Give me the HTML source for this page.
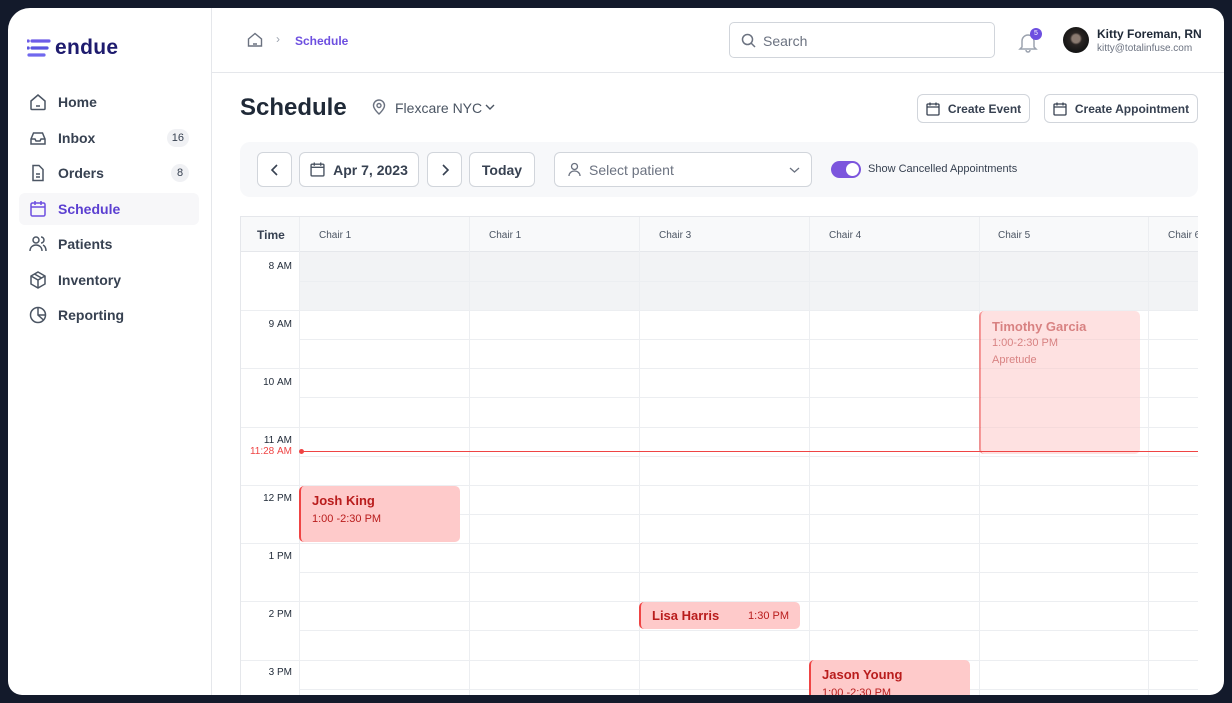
<!DOCTYPE html>
<html><head><meta charset="utf-8"><style>
*{box-sizing:border-box;margin:0;padding:0}
body{width:1232px;height:703px;background:#131a2b;font-family:"Liberation Sans",sans-serif;overflow:hidden;position:relative;color:#1f2937}
.app{position:absolute;left:8px;top:8px;width:1216px;height:687px;background:#fff;border-radius:22px 14px 14px 14px;overflow:hidden}
.abs{position:absolute}
.side{position:absolute;left:0;top:0;width:204px;height:687px;border-right:1px solid #e5e7eb}
.nav{position:absolute;left:11px;width:180px;height:32px;display:flex;align-items:center;font-size:14px;font-weight:bold;color:#374151}
.nav svg{position:absolute;left:10px}
.nav span.t{position:absolute;left:39px}
.badge{position:absolute;right:10px;background:#f0f1f4;border-radius:10px;font-size:11px;font-weight:normal;color:#374151;height:18px;min-width:18px;padding:0 5px;display:flex;align-items:center;justify-content:center}
.btn{position:absolute;border:1px solid #d1d5db;border-radius:6px;background:#fff;display:flex;align-items:center;justify-content:center;font-size:13px;font-weight:bold;color:#374151}
.grid{position:absolute;left:232px;top:208px;width:958px;height:480px;border-left:1px solid #e5e7eb;border-top:1px solid #e5e7eb;overflow:hidden}
.ev{position:absolute;border-left:2px solid #ef4444;border-radius:5px;background:#fecaca;color:#b91c1c;font-size:11px}
.ev b{display:block;font-size:13px;color:#b91c1c}
</style></head><body>
<div class="app">
<div class="side">
 <svg class="abs" style="left:19px;top:30px" width="26" height="22"><g stroke-linecap="round" stroke-width="3.2"><line x1="5" y1="3" x2="22" y2="3" stroke="#6d5ce8"/><line x1="1" y1="3" x2="1.2" y2="3" stroke="#6d5ce8"/><line x1="5" y1="10" x2="20" y2="10" stroke="#5a54e0"/><line x1="1" y1="10" x2="1.2" y2="10" stroke="#5a54e0"/><line x1="2" y1="17" x2="17" y2="17" stroke="#7068ee"/></g></svg>
 <div class="abs" style="left:47px;top:28px;font-size:21px;font-weight:bold;color:#1e1b6e;letter-spacing:0.3px">endue</div>
 <div class="nav" style="top:78px"><svg width="18" height="18" viewBox="0 0 18 18" fill="none" stroke="#4b5563" stroke-width="1.5"><path d="M2 8l7-6 7 6v7.5a1 1 0 0 1-1 1H3a1 1 0 0 1-1-1z"/><path d="M7 13h4"/></svg><span class="t">Home</span></div>
 <div class="nav" style="top:114px"><svg width="18" height="18" viewBox="0 0 18 18" fill="none" stroke="#4b5563" stroke-width="1.5"><path d="M2 10l2.5-6h9l2.5 6v5H2z"/><path d="M2 10h4l1 2h4l1-2h4"/></svg><span class="t">Inbox</span><span class="badge">16</span></div>
 <div class="nav" style="top:149px"><svg width="18" height="18" viewBox="0 0 18 18" fill="none" stroke="#4b5563" stroke-width="1.5"><path d="M4 1.5h6l4 4v11H4z"/><path d="M7 10h4M7 13h4"/></svg><span class="t">Orders</span><span class="badge">8</span></div>
 <div class="nav" style="top:185px;background:#f7f7f9;border-radius:6px;color:#5b3fd1"><svg width="18" height="18" viewBox="0 0 18 18" fill="none" stroke="#6d4fe0" stroke-width="1.5"><rect x="2" y="3" width="14" height="13" rx="1.5"/><path d="M2 7h14M6 1v4M12 1v4"/></svg><span class="t">Schedule</span></div>
 <div class="nav" style="top:220px"><svg width="18" height="18" viewBox="0 0 18 18" fill="none" stroke="#4b5563" stroke-width="1.5"><circle cx="7" cy="5" r="3"/><path d="M1 16c0-4 3-6 6-6s6 2 6 6M12 2a3 3 0 0 1 0 6M14 10c2 1 3 3 3 6"/></svg><span class="t">Patients</span></div>
 <div class="nav" style="top:256px"><svg width="18" height="18" viewBox="0 0 18 18" fill="none" stroke="#4b5563" stroke-width="1.5"><path d="M9 1l7 4v8l-7 4-7-4V5z"/><path d="M2 5l7 4 7-4M9 9v8M5.5 3l7 4"/></svg><span class="t">Inventory</span></div>
 <div class="nav" style="top:291px"><svg width="18" height="18" viewBox="0 0 18 18" fill="none" stroke="#4b5563" stroke-width="1.5"><circle cx="9" cy="9" r="7.5"/><path d="M9 1.5V9l5.5 5M9 9h7.5"/></svg><span class="t">Reporting</span></div>
</div>
<div class="abs" style="left:204px;top:64px;width:1012px;height:1px;background:#e5e7eb"></div>
<svg class="abs" style="left:239px;top:24px" width="16" height="16" viewBox="0 0 16 16" fill="none" stroke="#6b7280" stroke-width="1.4"><path d="M1.5 7l6.5-5.5 6.5 5.5v7h-13z"/><path d="M6 12h4"/></svg>
<div class="abs" style="left:268px;top:24px;font-size:12px;color:#9ca3af">›</div>
<div class="abs" style="left:287px;top:26px;font-size:12px;font-weight:bold;color:#6d4fe0">Schedule</div>
<div class="abs" style="left:721px;top:14px;width:266px;height:36px;border:1px solid #d1d5db;border-radius:5px"></div>
<svg class="abs" style="left:733px;top:25px" width="15" height="15" viewBox="0 0 15 15" fill="none" stroke="#6b7280" stroke-width="1.5"><circle cx="6.5" cy="6.5" r="5"/><path d="M10 10l4 4"/></svg>
<div class="abs" style="left:755px;top:25px;font-size:14px;color:#6b7280">Search</div>
<svg class="abs" style="left:1009px;top:23px" width="22" height="22" viewBox="0 0 22 22" fill="none" stroke="#9ca3af" stroke-width="1.5"><path d="M5 16V10a6 6 0 0 1 12 0v6l2 2H3z"/><path d="M9 19a2 2 0 0 0 4 0"/></svg>
<div class="abs" style="left:1022px;top:20px;width:12px;height:12px;border-radius:6px;background:#6d4fe0;color:#fff;font-size:7px;text-align:center;line-height:12px">5</div>
<div class="abs" style="left:1055px;top:19px;width:26px;height:26px;border-radius:13px;background:radial-gradient(circle at 50% 45%,#8a7a70 0 4px,#2a2523 6px,#151515 13px)"></div>
<div class="abs" style="left:1089px;top:19px;font-size:12px;font-weight:bold;color:#1f2937">Kitty Foreman, RN</div>
<div class="abs" style="left:1089px;top:35px;font-size:10px;color:#6b7280">kitty@totalinfuse.com</div>
<div class="abs" style="left:232px;top:86px;font-size:24px;font-weight:bold;color:#1f2937">Schedule</div>
<svg class="abs" style="left:364px;top:91px" width="14" height="16" viewBox="0 0 14 16" fill="none" stroke="#6b7280" stroke-width="1.4"><path d="M7 15s5.5-5 5.5-8.5a5.5 5.5 0 0 0-11 0C1.5 10 7 15 7 15z"/><circle cx="7" cy="6.5" r="2"/></svg>
<div class="abs" style="left:387px;top:92px;font-size:14px;color:#4b5563">Flexcare NYC</div>
<svg class="abs" style="left:477px;top:95px" width="10" height="8" viewBox="0 0 10 8" fill="none" stroke="#4b5563" stroke-width="1.4"><path d="M1 2l4 4 4-4"/></svg>
<div class="btn" style="left:909px;top:86px;width:113px;height:29px;font-size:12px"><svg width="14" height="14" viewBox="0 0 14 14" fill="none" stroke="#374151" stroke-width="1.3" style="margin-right:8px"><rect x="1" y="2" width="12" height="11" rx="1"/><path d="M1 5h12M4 0.5v3M10 0.5v3"/></svg>Create Event</div>
<div class="btn" style="left:1036px;top:86px;width:154px;height:29px;font-size:12px"><svg width="14" height="14" viewBox="0 0 14 14" fill="none" stroke="#374151" stroke-width="1.3" style="margin-right:8px"><rect x="1" y="2" width="12" height="11" rx="1"/><path d="M1 5h12M4 0.5v3M10 0.5v3"/></svg>Create Appointment</div>
<div class="abs" style="left:232px;top:134px;width:958px;height:55px;background:#f7f8fa;border-radius:10px"></div>
<div class="btn" style="left:249px;top:144px;width:35px;height:35px"><svg width="10" height="12" viewBox="0 0 10 12" fill="none" stroke="#374151" stroke-width="1.6"><path d="M7 1L2 6l5 5"/></svg></div>
<div class="btn" style="left:291px;top:144px;width:120px;height:35px;font-size:14px"><svg width="15" height="15" viewBox="0 0 14 14" fill="none" stroke="#4b5563" stroke-width="1.3" style="margin-right:8px"><rect x="1" y="2" width="12" height="11" rx="1"/><path d="M1 5h12M4 0.5v3M10 0.5v3"/></svg>Apr 7, 2023</div>
<div class="btn" style="left:419px;top:144px;width:35px;height:35px"><svg width="10" height="12" viewBox="0 0 10 12" fill="none" stroke="#374151" stroke-width="1.6"><path d="M3 1l5 5-5 5"/></svg></div>
<div class="btn" style="left:461px;top:144px;width:66px;height:35px;font-size:14px">Today</div>
<div class="btn" style="left:546px;top:144px;width:258px;height:35px;justify-content:flex-start;padding-left:12px;font-weight:normal;color:#6b7280;font-size:14px"><svg width="15" height="15" viewBox="0 0 15 15" fill="none" stroke="#6b7280" stroke-width="1.3" style="margin-right:7px"><circle cx="7.5" cy="4.5" r="3"/><path d="M2 14c0-3 2.5-5 5.5-5s5.5 2 5.5 5"/></svg>Select patient<svg width="11" height="8" viewBox="0 0 11 8" fill="none" stroke="#6b7280" stroke-width="1.3" style="position:absolute;right:11px"><path d="M1 2l4.5 4 4.5-4"/></svg></div>
<div class="abs" style="left:823px;top:153px;width:30px;height:17px;border-radius:9px;background:#7c55dd"></div>
<div class="abs" style="left:838px;top:155px;width:13px;height:13px;border-radius:7px;background:#fff"></div>
<div class="abs" style="left:860px;top:155px;font-size:11px;color:#374151">Show Cancelled Appointments</div>
<div class="grid">
 <div class="abs" style="left:0;top:0;width:958px;height:35px;background:#f8f9fa;border-bottom:1px solid #e5e7eb"></div>
 <div class="abs" style="left:0;top:35px;width:958px;height:58px;background:#f2f3f5"></div>
 <div class="abs" style="left:0;top:35px;width:59px;height:58px;background:#fff"></div>
 <div class="abs" style="left:16px;top:11px;font-size:12px;font-weight:bold;color:#374151">Time</div>
 <svg class="abs" style="left:0;top:0" width="958" height="480">
  <g stroke="#eceef1" stroke-width="1">
   <line x1="58.5" y1="0" x2="58.5" y2="480"/><line x1="228.5" y1="0" x2="228.5" y2="480"/><line x1="398.5" y1="0" x2="398.5" y2="480"/><line x1="568.5" y1="0" x2="568.5" y2="480"/><line x1="738.5" y1="0" x2="738.5" y2="480"/><line x1="907.5" y1="0" x2="907.5" y2="480"/>
   <line x1="0" y1="93.5" x2="958" y2="93.5"/><line x1="0" y1="151.5" x2="958" y2="151.5"/><line x1="0" y1="210.5" x2="958" y2="210.5"/><line x1="0" y1="268.5" x2="958" y2="268.5"/><line x1="0" y1="326.5" x2="958" y2="326.5"/><line x1="0" y1="384.5" x2="958" y2="384.5"/><line x1="0" y1="443.5" x2="958" y2="443.5"/>
   <line x1="59" y1="64.5" x2="958" y2="64.5"/><line x1="59" y1="122.5" x2="958" y2="122.5"/><line x1="59" y1="180.5" x2="958" y2="180.5"/><line x1="59" y1="239.5" x2="958" y2="239.5"/><line x1="59" y1="297.5" x2="958" y2="297.5"/><line x1="59" y1="355.5" x2="958" y2="355.5"/><line x1="59" y1="413.5" x2="958" y2="413.5"/><line x1="59" y1="472.5" x2="958" y2="472.5"/>
  </g>
 </svg>
 <div class="abs" style="left:78px;top:13px;font-size:10px;color:#4b5563">Chair 1</div>
 <div class="abs" style="left:248px;top:13px;font-size:10px;color:#4b5563">Chair 1</div>
 <div class="abs" style="left:418px;top:13px;font-size:10px;color:#4b5563">Chair 3</div>
 <div class="abs" style="left:588px;top:13px;font-size:10px;color:#4b5563">Chair 4</div>
 <div class="abs" style="left:757px;top:13px;font-size:10px;color:#4b5563">Chair 5</div>
 <div class="abs" style="left:927px;top:13px;font-size:10px;color:#4b5563;white-space:nowrap">Chair 6</div>
 <div class="abs" style="right:906px;top:44px;font-size:10px;color:#1f2937">8&nbsp;AM</div>
 <div class="abs" style="right:906px;top:102px;font-size:10px;color:#1f2937">9&nbsp;AM</div>
 <div class="abs" style="right:906px;top:160px;font-size:10px;color:#1f2937">10&nbsp;AM</div>
 <div class="abs" style="right:906px;top:218px;font-size:10px;color:#1f2937">11&nbsp;AM</div>
 <div class="abs" style="right:906px;top:229px;font-size:10px;color:#ef4444">11:28&nbsp;AM</div>
 <div class="abs" style="right:906px;top:276px;font-size:10px;color:#1f2937">12&nbsp;PM</div>
 <div class="abs" style="right:906px;top:334px;font-size:10px;color:#1f2937">1&nbsp;PM</div>
 <div class="abs" style="right:906px;top:392px;font-size:10px;color:#1f2937">2&nbsp;PM</div>
 <div class="abs" style="right:906px;top:450px;font-size:10px;color:#1f2937">3&nbsp;PM</div>
 <div class="ev" style="left:738px;top:94px;width:161px;height:143px;opacity:0.55;padding:7px 11px;line-height:17px"><b>Timothy Garcia</b>1:00-2:30 PM<br>Apretude</div>
 <div class="abs" style="left:60px;top:234px;width:898px;height:1px;background:#ef4444"></div>
 <div class="abs" style="left:58px;top:232px;width:5px;height:5px;border-radius:3px;background:#ef4444"></div>
 <div class="ev" style="left:58px;top:269px;width:161px;height:56px;padding:6px 11px;line-height:18px"><b>Josh King</b>1:00 -2:30 PM</div>
 <div class="ev" style="left:398px;top:385px;width:161px;height:27px;padding:0 11px;display:flex;align-items:center;justify-content:space-between"><b>Lisa Harris</b><span>1:30 PM</span></div>
 <div class="ev" style="left:568px;top:443px;width:161px;height:56px;padding:6px 11px;line-height:18px"><b>Jason Young</b>1:00 -2:30 PM</div>
</div>
</div>
</body></html>
